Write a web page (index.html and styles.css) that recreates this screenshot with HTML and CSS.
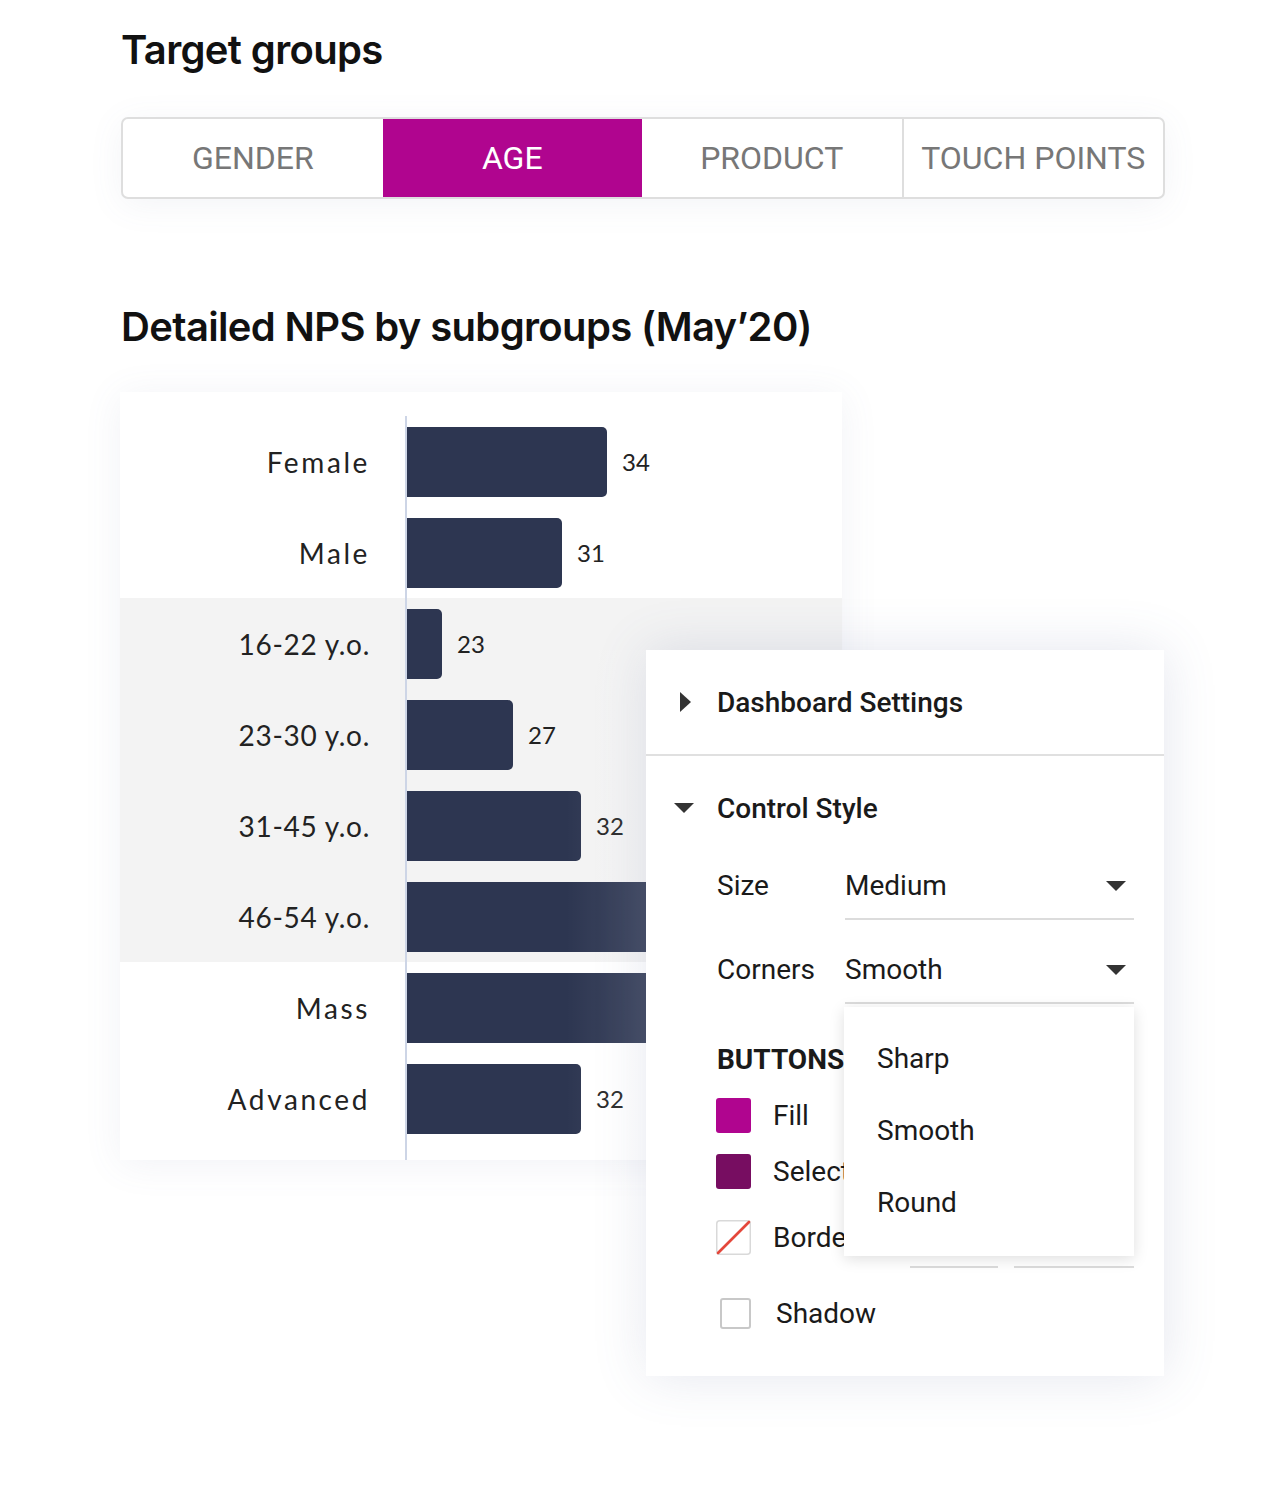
FILE: index.html
```html
<!DOCTYPE html>
<html lang="en">
<head>
<meta charset="utf-8">
<title>Target groups</title>
<link rel="stylesheet" href="styles.css">
</head>
<body>
<div class="page">
  <h1 class="heading">Target groups</h1>
  <div class="tabs">
    <div class="tab">GENDER</div>
    <div class="tab active">AGE</div>
    <div class="tab">PRODUCT</div>
    <div class="tab">TOUCH POINTS</div>
  </div>

  <h2 class="heading heading-2">Detailed NPS by subgroups (May’20)</h2>

  <div class="stage">
    <div class="chart">
      <div class="row"><div class="label word">Female</div><div class="plot"><div class="bar" style="width:200px"></div><span class="val">34</span></div></div>
      <div class="row"><div class="label word">Male</div><div class="plot"><div class="bar" style="width:155px"></div><span class="val">31</span></div></div>
      <div class="row shade"><div class="label">16-22 y.o.</div><div class="plot"><div class="bar" style="width:35px"></div><span class="val">23</span></div></div>
      <div class="row shade"><div class="label">23-30 y.o.</div><div class="plot"><div class="bar" style="width:106px"></div><span class="val">27</span></div></div>
      <div class="row shade"><div class="label">31-45 y.o.</div><div class="plot"><div class="bar" style="width:174px"></div><span class="val">32</span></div></div>
      <div class="row shade"><div class="label">46-54 y.o.</div><div class="plot"><div class="bar" style="width:300px"></div><span class="val">38</span></div></div>
      <div class="row"><div class="label word">Mass</div><div class="plot"><div class="bar" style="width:300px"></div><span class="val">36</span></div></div>
      <div class="row"><div class="label word">Advanced</div><div class="plot"><div class="bar" style="width:174px"></div><span class="val">32</span></div></div>
      <div class="tail"></div>
    </div>

    <div class="panel">
      <div class="sec-head">
        <svg class="tri-right" width="11" height="20" viewBox="0 0 11 20"><path d="M0 0L11 10L0 20Z" fill="#333"/></svg>
        <span class="sec-title">Dashboard Settings</span>
      </div>
      <div class="sec-head2">
        <svg class="tri-down" width="20" height="10" viewBox="0 0 20 10"><path d="M0 0L20 0L10 10Z" fill="#333"/></svg>
        <span class="sec-title">Control Style</span>
      </div>
      <div class="field">
        <div class="field-label">Size</div>
        <div class="select"><span>Medium</span><svg width="20" height="10" viewBox="0 0 20 10"><path d="M0 0L20 0L10 10Z" fill="#333"/></svg></div>
      </div>
      <div class="field">
        <div class="field-label">Corners</div>
        <div class="select"><span>Smooth</span><svg width="20" height="10" viewBox="0 0 20 10"><path d="M0 0L20 0L10 10Z" fill="#333"/></svg></div>
      </div>

      <div class="buttons">
        <div class="buttons-title">BUTTONS</div>
        <div class="swrow"><span class="sw sw-fill"></span><span class="swlabel">Fill</span></div>
        <div class="swrow swrow-sel"><span class="sw sw-sel"></span><span class="swlabel">Selected</span></div>
        <div class="swrow swrow-border">
          <svg class="sw-border" width="35" height="35" viewBox="0 0 35 35"><rect x="0.75" y="0.75" width="33.5" height="33.5" rx="3" fill="#fff" stroke="#d9d9d9" stroke-width="1.5"/><path d="M2 33L33 2" stroke="#e4473b" stroke-width="2.6" stroke-linecap="round"/></svg>
          <span class="swlabel">Border</span>
          <span class="mini mini-a"></span>
          <span class="mini mini-b"></span>
        </div>
        <div class="shadow-row"><span class="check"></span><span class="check-label">Shadow</span></div>
      </div>

      <div class="menu">
        <div class="menu-item">Sharp</div>
        <div class="menu-item">Smooth</div>
        <div class="menu-item">Round</div>
      </div>
    </div>
  </div>
</div>
</body>
</html>
```

FILE: styles.css
```css
* { box-sizing: border-box; }

body {
  margin: 0;
  background: #ffffff;
  font-family: Roboto, "Liberation Sans", sans-serif;
  color: #1a1a1a;
}

.page {
  position: relative;
  width: 1286px;
  min-height: 1500px;
  padding: 30px 0 0 121px;
}

.heading {
  margin: 0;
  font-family: Inter, "Liberation Sans", sans-serif;
  font-weight: 600;
  font-size: 40px;
  line-height: 40px;
  letter-spacing: -0.65px;
  color: #111;
}

.heading-2 {
  margin-top: 108px;
}

/* Tabs */
.tabs {
  margin-top: 47px;
  width: 1044px;
  height: 82px;
  display: flex;
  border: 2px solid #dedede;
  border-radius: 7px;
  overflow: hidden;
  background: #fff;
  box-shadow: 0 6px 34px rgba(100, 110, 150, 0.08);
}

.tab {
  flex: 1;
  display: flex;
  align-items: center;
  justify-content: center;
  font-size: 32px;
  color: #777;
  border-left: 2px solid #dedede;
}

.tab:first-child { border-left: 0; }

.tab.active {
  background: #b0058f;
  color: #fff;
  border-left: 0;
}

.tab.active + .tab { border-left: 0; }

/* Chart */
.stage {
  position: relative;
  margin-top: 45px;
}

.chart {
  width: 722px;
  margin-left: -1px;
  padding: 24px 0 0;
  background: #fff;
  box-shadow: 0 4px 36px rgba(100, 110, 160, 0.09);
}

.row {
  display: flex;
  height: 91px;
}

.row.shade { background: #f3f3f3; }

.label {
  width: 285px;
  padding-right: 35px;
  display: flex;
  align-items: center;
  justify-content: flex-end;
  font-family: Lato, "Liberation Sans", sans-serif;
  font-size: 28px;
  letter-spacing: 0.7px;
  color: #222;
}

.label.word { letter-spacing: 2.6px; }

.plot {
  flex: 1;
  display: flex;
  align-items: center;
  border-left: 2px solid #cdd5e6;
}

.bar {
  height: 70px;
  background: #2d3651;
  border-radius: 0 5px 5px 0;
}

.val {
  margin-left: 15px;
  font-family: Lato, "Liberation Sans", sans-serif;
  font-size: 24px;
  color: #222;
}

.tail {
  height: 16px;
  margin-left: 285px;
  border-left: 2px solid #cdd5e6;
}

/* Settings panel */
.panel {
  position: absolute;
  left: 525px;
  top: 258px;
  width: 518px;
  height: 726px;
  background: #fff;
  font-size: 28px;
  box-shadow: 0 0 50px rgba(90, 100, 150, 0.16);
}

.panel::before {
  content: "";
  position: absolute;
  top: 0;
  bottom: 0;
  left: -80px;
  width: 80px;
  background: linear-gradient(to right, rgba(255, 255, 255, 0), rgba(255, 255, 255, 0.1));
  pointer-events: none;
}

.sec-head {
  height: 106px;
  display: flex;
  align-items: center;
  padding-left: 34px;
  border-bottom: 2px solid #e0e0e0;
}

.tri-right { margin-right: 26px; }

.sec-title { font-weight: 500; }

.sec-head2 {
  height: 104px;
  display: flex;
  align-items: center;
  padding-left: 28px;
}

.tri-down { margin-right: 23px; }

.field {
  display: flex;
  align-items: flex-start;
  padding: 0 30px 0 71px;
}

.field + .field { margin-top: 24px; }

.field-label {
  width: 128px;
  padding-top: 10px;
  line-height: 32px;
}

.select {
  flex: 1;
  height: 60px;
  display: flex;
  align-items: center;
  justify-content: space-between;
  padding: 10px 8px 16px 0;
  line-height: 32px;
  border-bottom: 2px solid #dcdcdc;
}

.buttons {
  padding: 40px 30px 0 71px;
}

.buttons-title {
  font-weight: 700;
  line-height: 32px;
}

.swrow {
  display: flex;
  align-items: center;
  height: 35px;
  margin-top: 22px;
}

.swrow-sel { margin-top: 21px; }

.swrow-border {
  align-items: flex-start;
  height: 48px;
  margin-top: 31px;
}

.sw {
  width: 35px;
  height: 35px;
  margin-left: -1px;
  border-radius: 3px;
}

.sw-fill { background: #b0058f; }
.sw-sel { background: #770d61; }

.sw-border {
  margin-left: -1px;
  flex-shrink: 0;
}

.swlabel {
  margin-left: 22px;
  line-height: 35px;
}

.mini {
  height: 48px;
  border-bottom: 2px solid #dcdcdc;
}

.mini-a { width: 88px; margin-left: auto; }
.mini-b { width: 120px; margin-left: 16px; }

.shadow-row {
  display: flex;
  align-items: center;
  margin-top: 30px;
  height: 31px;
}

.check {
  width: 31px;
  height: 31px;
  margin-left: 3px;
  border: 2px solid #c8c8c8;
  border-radius: 3px;
}

.check-label { margin-left: 25px; }

.menu {
  position: absolute;
  left: 198px;
  top: 357px;
  width: 290px;
  height: 249px;
  padding: 16px 0 17px;
  background: #fff;
  box-shadow: 0 3px 14px rgba(0, 0, 0, 0.13);
}

.menu-item {
  height: 72px;
  line-height: 72px;
  padding-left: 33px;
}
```
